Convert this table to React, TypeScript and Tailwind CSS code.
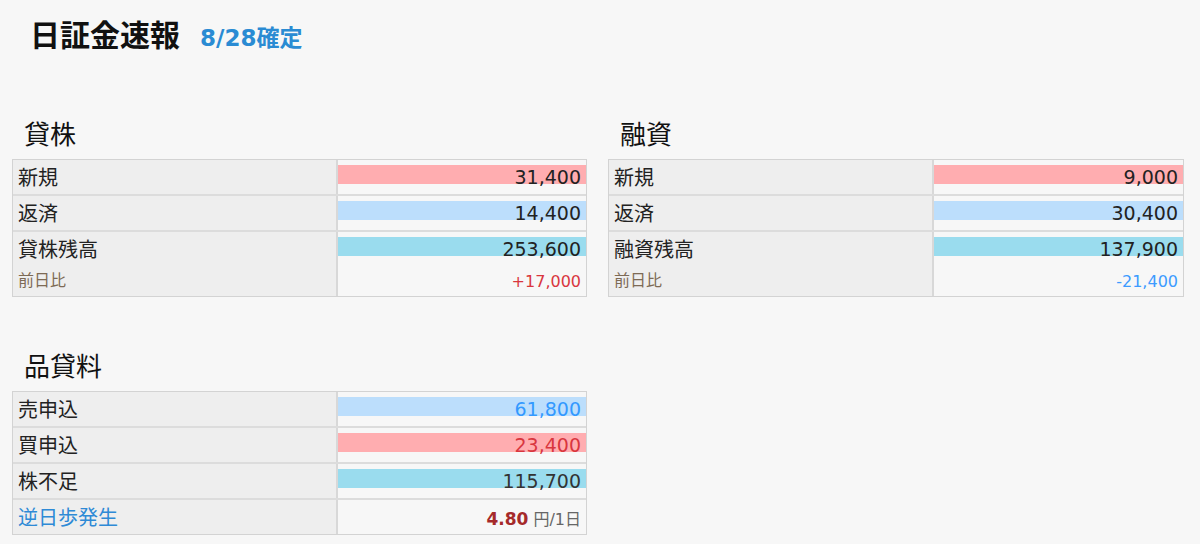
type Sub = { label: string; value: string; color: string };
type Row = {
  label: string;
  value: React.ReactNode;
  bar?: string;
  color?: string;
  labelColor?: string;
  sub?: Sub;
};

const taikabu: Row[] = [
  { label: "新規", value: "31,400", bar: "bg-[#ffadb0]" },
  { label: "返済", value: "14,400", bar: "bg-[#bcdefc]" },
  {
    label: "貸株残高",
    value: "253,600",
    bar: "bg-[#9adcee]",
    sub: { label: "前日比", value: "+17,000", color: "text-[#d9363e]" },
  },
];

const yushi: Row[] = [
  { label: "新規", value: "9,000", bar: "bg-[#ffadb0]" },
  { label: "返済", value: "30,400", bar: "bg-[#bcdefc]" },
  {
    label: "融資残高",
    value: "137,900",
    bar: "bg-[#9adcee]",
    sub: { label: "前日比", value: "-21,400", color: "text-[#3d9bff]" },
  },
];

const shinagashi: Row[] = [
  { label: "売申込", value: "61,800", bar: "bg-[#bcdefc]", color: "text-[#3399ff]" },
  { label: "買申込", value: "23,400", bar: "bg-[#ffadb0]", color: "text-[#d9363e]" },
  { label: "株不足", value: "115,700", bar: "bg-[#9adcee]", color: "text-[#333]" },
  {
    label: "逆日歩発生",
    labelColor: "text-[#2e8ad6]",
    value: (
      <span>
        <span className="text-[17px] font-bold text-[#a52a2a]">4.80</span>
        <span className="text-[16px] text-[#666]"> 円/1日</span>
      </span>
    ),
  },
];

const DataTable = ({ rows }: { rows: Row[] }) => (
  <div className="border border-[#d3d3d3] flex flex-col gap-[2px] bg-[#dcdcdc]">
    {rows.map((r) => (
      <div key={r.label} className="flex">
        <div className="w-[325px] shrink-0 border-r-2 border-[#d8d8d8] bg-[#eeeeee] flex flex-col">
          <div className={`h-[34px] flex items-center pl-[5px] pt-[1px] text-[20px] ${r.labelColor ?? "text-[#222]"}`}>
            {r.label}
          </div>
          {r.sub && (
            <div className="h-[30px] flex items-center pl-[5px] text-[16px] text-[#7d6a55]">{r.sub.label}</div>
          )}
        </div>
        <div className="flex-1 bg-[#f7f7f7] flex flex-col">
          {r.bar ? (
            <div className="h-[34px] pt-[5px]">
              <div
                className={`h-[19px] pt-[3px] pr-[5px] text-right text-[19px] leading-[19px] ${r.bar} ${r.color ?? "text-[#222]"}`}
              >
                {r.value}
              </div>
            </div>
          ) : (
            <div className="h-[34px] pt-[5px] pr-[5px] flex items-center justify-end">{r.value}</div>
          )}
          {r.sub && (
            <div className={`h-[30px] pt-[2px] flex items-center justify-end pr-[5px] text-[16px] ${r.sub.color}`}>
              {r.sub.value}
            </div>
          )}
        </div>
      </div>
    ))}
  </div>
);

const Section = ({ title, rows }: { title: string; rows: Row[] }) => (
  <section>
    <h2 className="h-[32px] mb-[8px] pl-3 text-[26px] leading-[32px] text-[#111]">{title}</h2>
    <DataTable rows={rows} />
  </section>
);

export default function App() {
  return (
    <div className="min-h-screen bg-[#f7f7f7] font-['DejaVu_Sans','Noto_Sans_CJK_JP',sans-serif] text-[#222]">
      <h1 className="flex items-baseline gap-[20px] pl-[30px] pt-[13px]">
        <span className="text-[30px] font-bold text-[#111]">日証金速報</span>
        <span className="text-[23px] font-bold text-[#2a8bd3]">8/28確定</span>
      </h1>
      <div className="grid grid-cols-[575px_576px] gap-x-[21px] gap-y-[54px] pl-3 pt-[61px]">
        <Section title="貸株" rows={taikabu} />
        <Section title="融資" rows={yushi} />
        <Section title="品貸料" rows={shinagashi} />
      </div>
    </div>
  );
}
